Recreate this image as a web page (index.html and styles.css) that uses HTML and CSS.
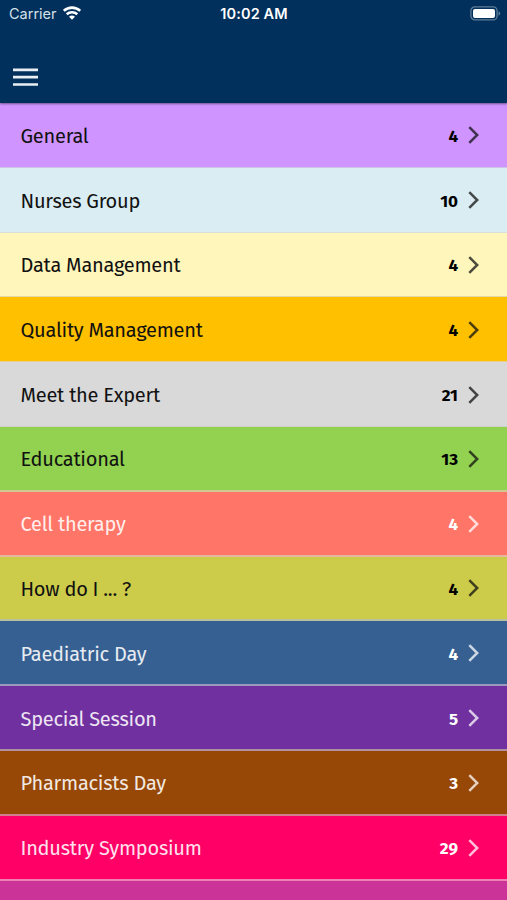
FILE: index.html
```html
<!DOCTYPE html>
<html lang="en">
<head>
<meta charset="utf-8">
<title>Sessions</title>
<link rel="stylesheet" href="styles.css">
</head>
<body>
<svg class="defs" width="0" height="0"><symbol id="chevron" viewBox="0 0 12 18"><path d="M1.3 1.2 9.2 9l-7.9 7.8" fill="none" stroke="currentColor" stroke-width="2.5"/></symbol></svg>
<header class="header">
  <div class="status">
    <div class="carrier"><span>Carrier</span>
      <svg width="18" height="14" viewBox="0 0 18 14" fill="none" stroke="#fff" stroke-width="2.6"><path d="M.8 4.9C5.4.5 12.6.5 17.2 4.9M3.7 8.2c3-2.7 7.6-2.7 10.6 0"/><path d="M6 10.8c1.7-1.6 4.3-1.6 6 0L9 13.8z" fill="#fff" stroke="none"/></svg>
    </div>
    <div class="time">10:02 AM</div>
    <svg class="battery" width="31" height="15" viewBox="0 0 31 15"><rect x=".9" y=".9" width="26.2" height="13" rx="4" fill="none" stroke="#5e7d98" stroke-width="1.3"/><rect x="3" y="3" width="22" height="9" rx="2" fill="#fff"/><path d="M28.5 5.2c2.3.8 2.3 3.7 0 4.5z" fill="#5e7d98"/></svg>
  </div>
  <div class="toolbar"><svg class="menu" width="25" height="19" viewBox="0 0 25 19"><path d="M0 1.9h25M0 9.2h25M0 16.5h25" stroke="#e8eef4" stroke-width="2.7"/></svg></div>
</header>
<main class="list">
  <div class="row general"><span class="label">General</span><b>4</b><svg><use href="#chevron"/></svg></div>
  <div class="row nurses"><span class="label">Nurses Group</span><b>10</b><svg><use href="#chevron"/></svg></div>
  <div class="row data"><span class="label">Data Management</span><b>4</b><svg><use href="#chevron"/></svg></div>
  <div class="row quality"><span class="label">Quality Management</span><b>4</b><svg><use href="#chevron"/></svg></div>
  <div class="row meet"><span class="label">Meet the Expert</span><b>21</b><svg><use href="#chevron"/></svg></div>
  <div class="row educational"><span class="label">Educational</span><b>13</b><svg><use href="#chevron"/></svg></div>
  <div class="row light cell"><span class="label">Cell therapy</span><b>4</b><svg><use href="#chevron"/></svg></div>
  <div class="row how"><span class="label">How do I ... ?</span><b>4</b><svg><use href="#chevron"/></svg></div>
  <div class="row light paediatric"><span class="label">Paediatric Day</span><b>4</b><svg><use href="#chevron"/></svg></div>
  <div class="row light special"><span class="label">Special Session</span><b>5</b><svg><use href="#chevron"/></svg></div>
  <div class="row light pharmacists"><span class="label">Pharmacists Day</span><b>3</b><svg><use href="#chevron"/></svg></div>
  <div class="row light industry"><span class="label">Industry Symposium</span><b>29</b><svg><use href="#chevron"/></svg></div>
  <div class="row last"></div>
</main>
</body>
</html>
```
FILE: styles.css
```css
* { box-sizing: border-box; }
body { margin: 0; height: 900px; overflow: hidden; display: flex; flex-direction: column; background: #00305b; font-family: "Fira Sans", "Noto Sans", sans-serif; }
.defs { display: none; }
.header { height: 103px; flex: none; background: #00305b; color: #fff; box-shadow: 0 1px 2px rgba(0,0,0,.45); z-index: 1; }
.status { height: 28px; display: grid; grid-template-columns: 1fr auto 1fr; align-items: center; padding: 0 6px 0 9px; font: 14.5px/28px Inter, sans-serif; }
.carrier { display: flex; align-items: center; gap: 6px; color: #d5e0ea; letter-spacing: 0; }
.carrier svg { margin-top: -2px; }
.time { font-weight: 600; letter-spacing: .15px; margin-right: 2px; }
.battery { justify-self: end; margin-top: -2px; }
.toolbar { height: 75px; padding: 39.5px 13px 0; }
.menu { display: block; }
.list { flex: none; }
.row { height: 64.8px; display: flex; align-items: center; padding: 2px 27px 0 20.5px; border-bottom: 2px solid #d2c8c6; color: #111; }
.label { flex: 1; font-size: 20px; line-height: 28px; letter-spacing: -.25px; white-space: nowrap; }
.row b { font-size: 17px; line-height: 28px; margin: 2px 10px 0 0; color: #000; }
.row svg { width: 12px; height: 18px; margin-top: -1px; opacity: .75; }
.light, .light b { color: #fff; }
.light .label { opacity: .88; }
.general { background: #cf94ff; border-width: 1px; border-color: #cfc4e8; }
.nurses { background: #daedf2; border-width: 1px; border-color: #d8dfda; }
.data { background: #fff6bb; border-width: 1px; border-color: #e2d8a8; }
.quality { background: #ffc000; border-width: 1px; border-color: #e8cf94; }
.meet { background: #d9d9d9; border-width: 1px; border-color: #ced1c8; }
.educational { background: #92d250; border-color: #d1c892; }
.cell { background: #ff7668; border-color: #e3b89c; }
.how { background: #cdcc4a; border-color: #b8c0a0; }
.paediatric { background: #366092; border-color: #9c98bd; }
.special { background: #7030a0; border-color: #b090a0; }
.pharmacists { background: #974706; border-color: #d0808a; }
.industry { background: #ff0066; border-color: #ee80b3; }
.last { background: #cc3399; }
```
